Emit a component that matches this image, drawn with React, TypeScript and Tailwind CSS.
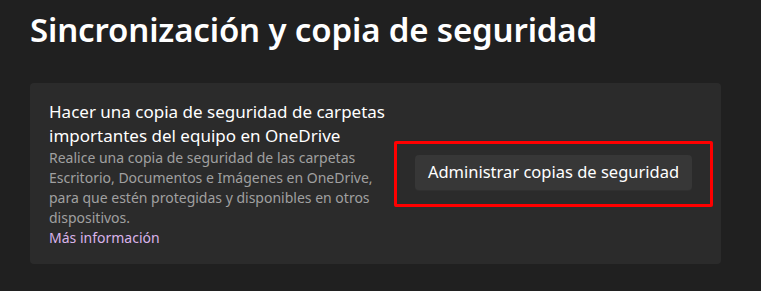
export default function App() {
  return (
    <div className="h-[291px] w-full overflow-hidden bg-[#202020] px-[30px] pt-[6px] font-['Noto_Sans',sans-serif] text-white">
      <h1 className="text-[33px] leading-[48px] font-semibold tracking-[-0.15px]">
        Sincronización y copia de seguridad
      </h1>

      <div className="mt-[29px] flex h-[181px] w-[691px] items-center justify-between rounded-[4px] bg-[#2b2b2b] pl-[19px] pr-[8px]">
        <div className="w-[340px]">
          <p className="text-[17px] leading-[24px] text-[#ffffff]">
            Hacer una copia de seguridad de carpetas importantes del equipo en OneDrive
          </p>
          <p className="text-[14px] leading-[20px] text-[#a0a0a0]">
            Realice una copia de seguridad de las carpetas Escritorio, Documentos e Imágenes en OneDrive,
            para que estén protegidas y disponibles en otros dispositivos.
          </p>
          <a href="#" className="block text-[14px] leading-[20px] text-[#d9b3ea]">
            Más información
          </a>
        </div>

        <div className="rounded-[2px] border-[3px] border-[#ff0000] px-[18px] pb-[14px] pt-[11px]">
          <button className="h-[35px] w-[277px] rounded-[4px] bg-[#373737] text-[16.5px] text-white shadow-[0_1px_0_#303030]">
            Administrar copias de seguridad
          </button>
        </div>
      </div>
    </div>
  );
}
